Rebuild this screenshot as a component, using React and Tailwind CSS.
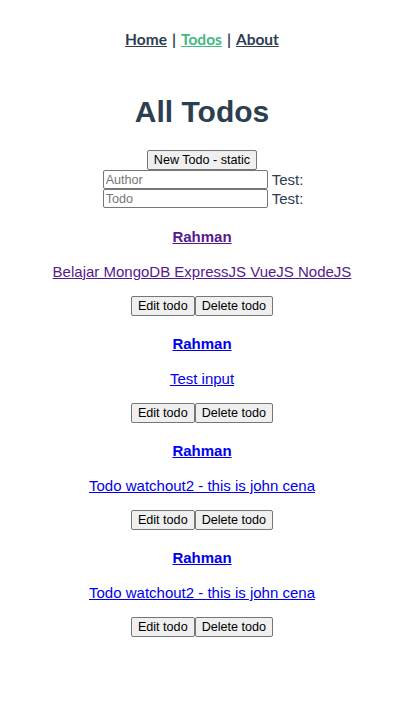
import React from 'react';

const todos = [
  { id: 1, author: 'Rahman', text: 'Belajar MongoDB ExpressJS VueJS NodeJS', visited: true },
  { id: 2, author: 'Rahman', text: 'Test input' },
  { id: 3, author: 'Rahman', text: 'Todo watchout2 - this is john cena' },
  { id: 4, author: 'Rahman', text: 'Todo watchout2 - this is john cena' },
];

const btn =
  'bg-[#efefef] border border-[#767676] rounded-[2px] px-[6px] h-[20px] whitespace-nowrap text-[12.6px] leading-none text-black font-["Liberation_Sans",Arial,sans-serif]';

const input =
  'w-[165px] h-[19px] border border-[#767676] rounded-[2px] px-[2px] text-[12.6px] text-black placeholder:text-[#757575] font-["Liberation_Sans",Arial,sans-serif]';

const TodoItem = ({ todo }) => {
  const color = todo.visited ? 'text-[#551a8b]' : 'text-[#0000ee]';
  return (
    <div className="flex flex-col items-center">
      <a href="#" className={`${color} underline font-bold text-[15px] leading-[18px] h-[18px]`}>
        {todo.author}
      </a>
      <a href="#" className={`${color} underline text-[15px] leading-[18px] h-[18px] mt-[17px]`}>
        {todo.text}
      </a>
      <div className="flex mt-[15px]">
        <button className={btn}>Edit todo</button>
        <button className={btn}>Delete todo</button>
      </div>
    </div>
  );
};

export default function App() {
  return (
    <div className="min-h-screen bg-white text-center text-[#2c3e50] font-['Liberation_Sans',Arial,sans-serif]">
      <div className="pt-[30px] flex justify-center text-[15.5px] leading-[18px] font-['Lato',sans-serif] font-bold">
        <a href="#" className="underline text-[#2c3e50]">Home</a>
        <span className="mx-[5px]">|</span>
        <a href="#" className="underline text-[#42b983]">Todos</a>
        <span className="mx-[5px]">|</span>
        <a href="#" className="underline text-[#2c3e50]">About</a>
      </div>

      <h1 className="mt-[46px] text-[30px] leading-[35px] font-bold">All Todos</h1>

      <div className="mt-[21px] flex flex-col items-center">
        <button className={btn}>New Todo - static</button>
        <div className="flex items-center ml-[2px]">
          <input className={input} placeholder="Author" />
          <span className="ml-[4px] text-[15px] leading-[18px]">Test:</span>
        </div>
        <div className="flex items-center ml-[2px]">
          <input className={input} placeholder="Todo" />
          <span className="ml-[4px] text-[15px] leading-[18px]">Test:</span>
        </div>
      </div>

      <div className="mt-[20px] flex flex-col gap-[19px]">
        {todos.map((t) => (
          <TodoItem key={t.id} todo={t} />
        ))}
      </div>
    </div>
  );
}
